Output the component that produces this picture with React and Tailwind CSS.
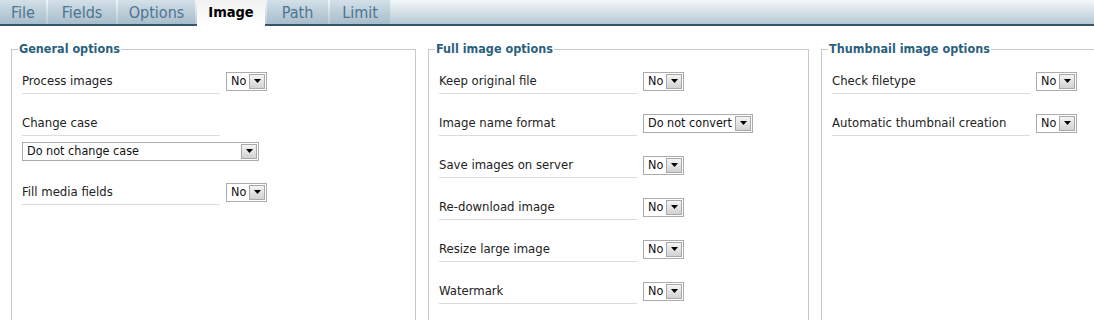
import React from 'react';

const tabs = [
  { name: 'File', width: 'w-[46px]' },
  { name: 'Fields', width: 'w-[68px]' },
  { name: 'Options', width: 'w-[77px]' },
  { name: 'Image', width: 'w-[68px]', active: true },
  { name: 'Path', width: 'w-[61px]' },
  { name: 'Limit', width: 'w-[60px]' },
];

const Select = ({ value, width }) => (
  <div className={`flex items-center h-[19px] border border-[#a5acb2] bg-white ${width}`}>
    <span className="flex-1 pl-[4px] text-[12.5px] leading-none text-[#111] whitespace-nowrap">{value}</span>
    <span className="mr-[1px] w-[16px] h-[15px] border border-[#a8a8a8] bg-gradient-to-b from-[#f4f4f4] to-[#d2d2d2] flex items-center justify-center">
      <svg width="7" height="4" viewBox="0 0 7 4">
        <path d="M0 0h7L3.5 4z" fill="#000" />
      </svg>
    </span>
  </div>
);

const Label = ({ children }) => (
  <div className="w-[198px] h-[25px] leading-[24px] border-b border-[#dcdcdc] text-[13px] text-[#222] whitespace-nowrap">
    {children}
  </div>
);

const Row = ({ label, value = 'No', width = 'w-[41px]' }) => (
  <div className="flex items-start h-[42px]">
    <Label>{label}</Label>
    <div className="ml-[6px] mt-[3px]">
      <Select value={value} width={width} />
    </div>
  </div>
);

const Group = ({ title, width, children }) => (
  <fieldset className={`${width} h-[400px] shrink-0 border border-[#c8c8c8] px-[10px]`}>
    <legend className="-ml-[4px] px-[1px] text-[12.5px] font-bold text-[#2b5f7e]">{title}</legend>
    <div className="pt-[10px]">{children}</div>
  </fieldset>
);

export default function App() {
  return (
    <div className="w-[1094px] h-[320px] overflow-hidden bg-white font-['DejaVu_Sans_Condensed','DejaVu_Sans',sans-serif]">
      <div className="flex h-[26px] border-b-2 border-[#34566c] bg-gradient-to-b from-[#f3f7f9] to-[#b6cad6]">
        <div className="flex gap-[2px]">
          {tabs.map((t) =>
            t.active ? (
              <div
                key={t.name}
                className={`${t.width} h-[26px] -mb-[2px] text-center bg-gradient-to-b from-[#f2f2f2] to-white text-[14.5px] font-bold text-black leading-[25px]`}
              >
                {t.name}
              </div>
            ) : (
              <div
                key={t.name}
                className={`${t.width} h-[24px] text-center bg-gradient-to-b from-[#d3e0e8] to-[#a7bdcb] text-[16px] text-[#4d7590] leading-[25px]`}
              >
                {t.name}
              </div>
            )
          )}
        </div>
      </div>

      <div className="flex gap-[12px] pl-[11px] pt-[14px]">
        <Group title="General options" width="w-[405px]">
          <Row label="Process images" />
          <div className="h-[69px]">
            <Label>Change case</Label>
            <div className="mt-[6px]">
              <Select value="Do not change case" width="w-[237px]" />
            </div>
          </div>
          <Row label="Fill media fields" />
        </Group>

        <Group title="Full image options" width="w-[381px]">
          <Row label="Keep original file" />
          <Row label="Image name format" value="Do not convert" width="w-[110px]" />
          <Row label="Save images on server" />
          <Row label="Re-download image" />
          <Row label="Resize large image" />
          <Row label="Watermark" />
        </Group>

        <Group title="Thumbnail image options" width="w-[405px]">
          <Row label="Check filetype" />
          <Row label="Automatic thumbnail creation" />
        </Group>
      </div>
    </div>
  );
}
